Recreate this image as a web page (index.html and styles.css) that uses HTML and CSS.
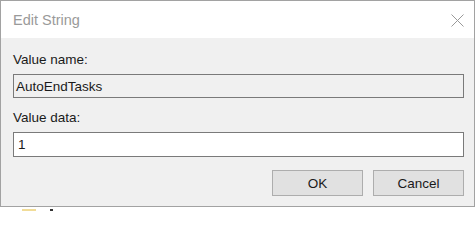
FILE: index.html
```html
<!DOCTYPE html>
<html>
<head>
<meta charset="utf-8">
<title>Edit String</title>
<link rel="stylesheet" href="styles.css">
</head>
<body>
<div class="dialog">
  <div class="titlebar">
    <span class="title">Edit String</span>
    <svg class="close" width="13" height="13" viewBox="0 0 13 13" aria-hidden="true">
      <path d="M0.5 0.5 L12.5 12.5 M12.5 0.5 L0.5 12.5" stroke="#999999" stroke-width="1" fill="none"/>
    </svg>
  </div>
  <div class="content">
    <label class="label label-first">Value name:</label>
    <div class="field field-readonly">AutoEndTasks</div>
    <label class="label label-second">Value data:</label>
    <div class="field field-edit">1</div>
    <div class="buttons">
      <button class="btn">OK</button>
      <button class="btn">Cancel</button>
    </div>
  </div>
</div>
<div class="behind">
  <span class="folder"></span>
  <span class="dot"></span>
</div>
</body>
</html>
```

FILE: styles.css
```css
html, body {
  margin: 0;
  padding: 0;
  background: #ffffff;
}

body {
  width: 476px;
  height: 211px;
  overflow: hidden;
  font-family: "Liberation Sans", Arial, sans-serif;
  font-size: 13.5px;
  color: #000;
}

.dialog {
  width: 475px;
  border: 1px solid #a2a2a2;
  box-sizing: border-box;
  background: #f0f0f0;
  display: flex;
  flex-direction: column;
}

.titlebar {
  height: 37px;
  background: #ffffff;
  display: flex;
  align-items: center;
  justify-content: space-between;
  padding: 0 10px 0 12px;
}

.title {
  font-size: 14.5px;
  color: #9a9a9a;
  padding-top: 1px;
}

.close {
  display: block;
  margin-top: 1px;
}

.content {
  display: flex;
  flex-direction: column;
  padding: 0 10px 10px 12px;
}

.label {
  display: block;
  height: 16px;
  line-height: 16px;
  color: #1a1a1a;
}

.label-first {
  margin-top: 14px;
  margin-bottom: 6px;
}

.label-second {
  margin-top: 12px;
  margin-bottom: 6px;
}

.field {
  box-sizing: border-box;
  border: 1px solid #7a7a7a;
  padding: 0 3px;
  display: flex;
  align-items: center;
  color: #1a1a1a;
}

.field-readonly {
  height: 24px;
  background: #f0f0f0;
  padding-left: 2px;
}

.field-edit {
  height: 25px;
  background: #ffffff;
  padding-left: 4px;
}

.buttons {
  display: flex;
  justify-content: flex-end;
  gap: 10px;
  margin-top: 13px;
}

.btn {
  width: 91px;
  height: 26px;
  box-sizing: border-box;
  background: #e1e1e1;
  border: 1px solid #adadad;
  font-family: "Liberation Sans", Arial, sans-serif;
  font-size: 13.5px;
  color: #1a1a1a;
  padding: 0;
  margin: 0;
}

.behind {
  height: 4px;
  display: flex;
  align-items: flex-end;
  gap: 14px;
  padding-left: 22px;
}

.folder {
  width: 14px;
  height: 2px;
  background: #f1dc98;
}

.dot {
  width: 3px;
  height: 2px;
  background: #333;
}
```
